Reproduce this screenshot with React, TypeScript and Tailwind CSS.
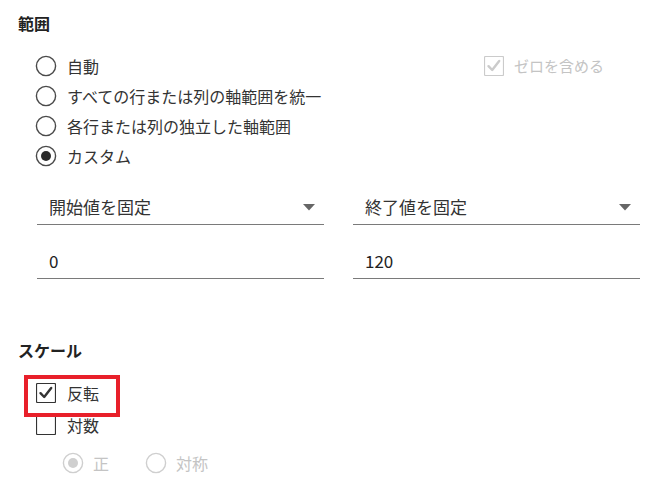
import React from 'react';

const font = '"Noto Sans CJK JP", "Noto Sans", sans-serif';

function Radio({ checked, disabled }: { checked?: boolean; disabled?: boolean }) {
  const stroke = disabled ? '#cfcfcf' : '#4a4a4a';
  const dot = disabled ? '#cfcfcf' : '#2b2b2b';
  return (
    <svg width="22" height="22" viewBox="0 0 22 22" className="shrink-0">
      <circle cx="11" cy="11" r="9.6" fill="white" stroke={stroke} strokeWidth="1.4" />
      {checked && <circle cx="11" cy="11" r="5" fill={dot} />}
    </svg>
  );
}

function Check({ checked, disabled }: { checked?: boolean; disabled?: boolean }) {
  const c = disabled ? '#cbcbcb' : '#333333';
  return (
    <svg width="20" height="20" viewBox="0 0 20 20" className="shrink-0">
      <rect x="0.5" y="0.5" width="19" height="19" rx="1" fill="white" stroke={c} strokeWidth="1.2" />
      {checked && (
        <path d="M4.5 10.2 L8.2 14 L15.2 5" fill="none" stroke={c} strokeWidth="2.4" strokeLinecap="round" strokeLinejoin="round" />
      )}
    </svg>
  );
}

function Select({ label }: { label: string }) {
  return (
    <div className="h-[35px] flex items-center justify-between pl-3 pr-[9px] border-b border-[#7a7a7a] text-[17px] text-[#333]">
      <span>{label}</span>
      <svg width="12" height="7" viewBox="0 0 12 7">
        <path d="M0 0 H12 L6 6.5 Z" fill="#666" />
      </svg>
    </div>
  );
}

function Field({ value }: { value: string }) {
  return (
    <div className="h-[35px] flex items-center pl-3 border-b border-[#7a7a7a] text-[17px] text-[#222]">
      {value}
    </div>
  );
}

export default function App() {
  const options = ['自動', 'すべての行または列の軸範囲を統一', '各行または列の独立した軸範囲', 'カスタム'];

  return (
    <div className="w-[655px] h-[495px] bg-white overflow-hidden" style={{ fontFamily: font }}>
      <div className="pt-[11px] pl-[18px] h-6 leading-6 text-[16px] font-bold text-[#222] box-content">範囲</div>

      <div className="flex mt-[16px]">
        <div className="flex-1 pl-[35px]">
          {options.map((o, i) => (
            <div key={o} className="h-[30px] flex items-center gap-[10px] text-[16px] text-[#333]">
              <Radio checked={i === 3} />
              <span>{o}</span>
            </div>
          ))}
        </div>
        <div className="w-[171px] shrink-0 h-[30px] flex items-center gap-[10px] text-[15px] text-[#c4c4c4]">
          <Check checked disabled />
          <span>ゼロを含める</span>
        </div>
      </div>

      <div className="grid grid-cols-2 gap-x-[29px] pl-[37px] pr-[15px] mt-[19px]">
        <Select label="開始値を固定" />
        <Select label="終了値を固定" />
        <div className="mt-[19px]"><Field value="0" /></div>
        <div className="mt-[19px]"><Field value="120" /></div>
      </div>

      <div className="mt-[59px] pl-[18px] h-6 leading-6 text-[16px] font-bold text-[#222]">スケール</div>

      <div className="mt-[15px] pl-[36px]">
        <div className="relative h-[32px] flex items-center gap-[11px] text-[16px] text-[#333]">
          <Check checked />
          <span>反転</span>
          <span className="absolute left-[-12px] top-[-2px] w-[96px] h-[42px] border-4 border-[#e8202a]" />
        </div>
        <div className="h-[31px] flex items-center gap-[11px] text-[16px] text-[#333]">
          <Check />
          <span>対数</span>
        </div>
        <div className="mt-[8px] h-[30px] flex items-center pl-[26px] text-[16px] text-[#c4c4c4]">
          <div className="flex items-center gap-[9px]">
            <Radio checked disabled />
            <span>正</span>
          </div>
          <div className="flex items-center gap-[9px] ml-[36px]">
            <Radio disabled />
            <span>対称</span>
          </div>
        </div>
      </div>
    </div>
  );
}
